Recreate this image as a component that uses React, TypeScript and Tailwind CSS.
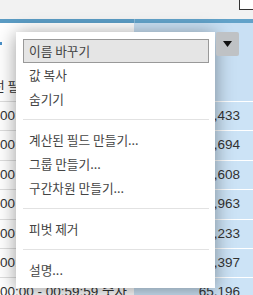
import React from "react";

const rows = [
  { label: "00:00 - 00:59:59 숫자", value: "12,433" },
  { label: "00:00 - 00:59:59 숫자", value: "11,694" },
  { label: "00 - 00:59:59 숫자", value: "10,608" },
  { label: "00 - 00:59:59 숫자", value: "13,963" },
  { label: "00:00 - 00:59:59 숫자", value: "14,233" },
  { label: "00:00 - 00:59:59 숫자", value: "15,397" },
  { label: "00:00 - 00:59:59 숫자", value: "65,196" },
];

type Item = { label: string } | "sep";

const items: Item[] = [
  { label: "값 복사" },
  { label: "숨기기" },
  "sep",
  { label: "계산된 필드 만들기..." },
  { label: "그룹 만들기..." },
  { label: "구간차원 만들기..." },
  "sep",
  { label: "피벗 제거" },
  "sep",
  { label: "설명..." },
];

function FieldMenu() {
  return (
    <div className="absolute left-[16px] top-[32px] w-[199px] bg-white pl-[7px] pr-[6px] pt-[7px] pb-[6px] shadow-[0_2px_18px_rgba(0,0,0,0.4)] text-[12.7px] text-[#444] font-['Noto_Sans_CJK_KR','Noto_Sans',sans-serif]">
      <div className="h-[24px] flex items-center border border-[#999] bg-[#e5e5e5] pl-[5px]">이름 바꾸기</div>
      {items.map((it, i) =>
        it === "sep" ? (
          <div key={i} className="py-[8px]">
            <div className="h-px bg-[#e2e2e2]" />
          </div>
        ) : (
          <div key={i} className="h-[24px] flex items-center pl-[6px]">{it.label}</div>
        )
      )}
    </div>
  );
}

export default function App() {
  return (
    <div className="relative w-full h-[295px] overflow-hidden bg-white font-['Liberation_Sans','Noto_Sans_CJK_KR',sans-serif] text-[13.5px] text-[#333]">
      <div className="h-[19px] bg-[#f2f2f2] flex justify-end">
        <div className="w-[14px] h-[10px] border-l border-b border-[#333] bg-white" />
      </div>
      <div className="h-[4px] flex">
        <div className="w-[134px] bg-[#5b9cc4]" />
        <div className="w-px bg-[#8ab8d6]" />
        <div className="flex-1 bg-[#62a2c9]" />
      </div>

      <div className="flex h-[79px]">
        <div className="w-[134px] border-b border-[#ddd] overflow-hidden">
          <div className="w-[2px] h-[3px] bg-[#4a90c8] mt-[19px]" />
          <div className="mt-[32px] -ml-[7px] leading-[18px] whitespace-nowrap text-[12.7px] font-['Noto_Sans_CJK_KR',sans-serif]">선 필드</div>
        </div>
        <div className="flex-1 bg-[#c9e0f4] border-b border-white" />
      </div>

      {rows.map((r, i) => (
        <div key={i} className="flex h-[29.4px]">
          <div className="w-[134px] border-b border-[#ddd] flex items-center whitespace-nowrap overflow-hidden">{r.label}</div>
          <div className="flex-1 bg-[#cce3f6] border-b border-white flex items-center justify-end pr-[13px]">{r.value}</div>
        </div>
      ))}

      <FieldMenu />

      <div className="absolute left-[216px] top-[32px] w-[23px] h-[24px] rounded-[2px] bg-[#bfc2c5] flex items-center justify-center">
        <svg width="9" height="6" viewBox="0 0 9 6">
          <path d="M0 0h9L4.5 6z" fill="#111" />
        </svg>
      </div>
    </div>
  );
}
